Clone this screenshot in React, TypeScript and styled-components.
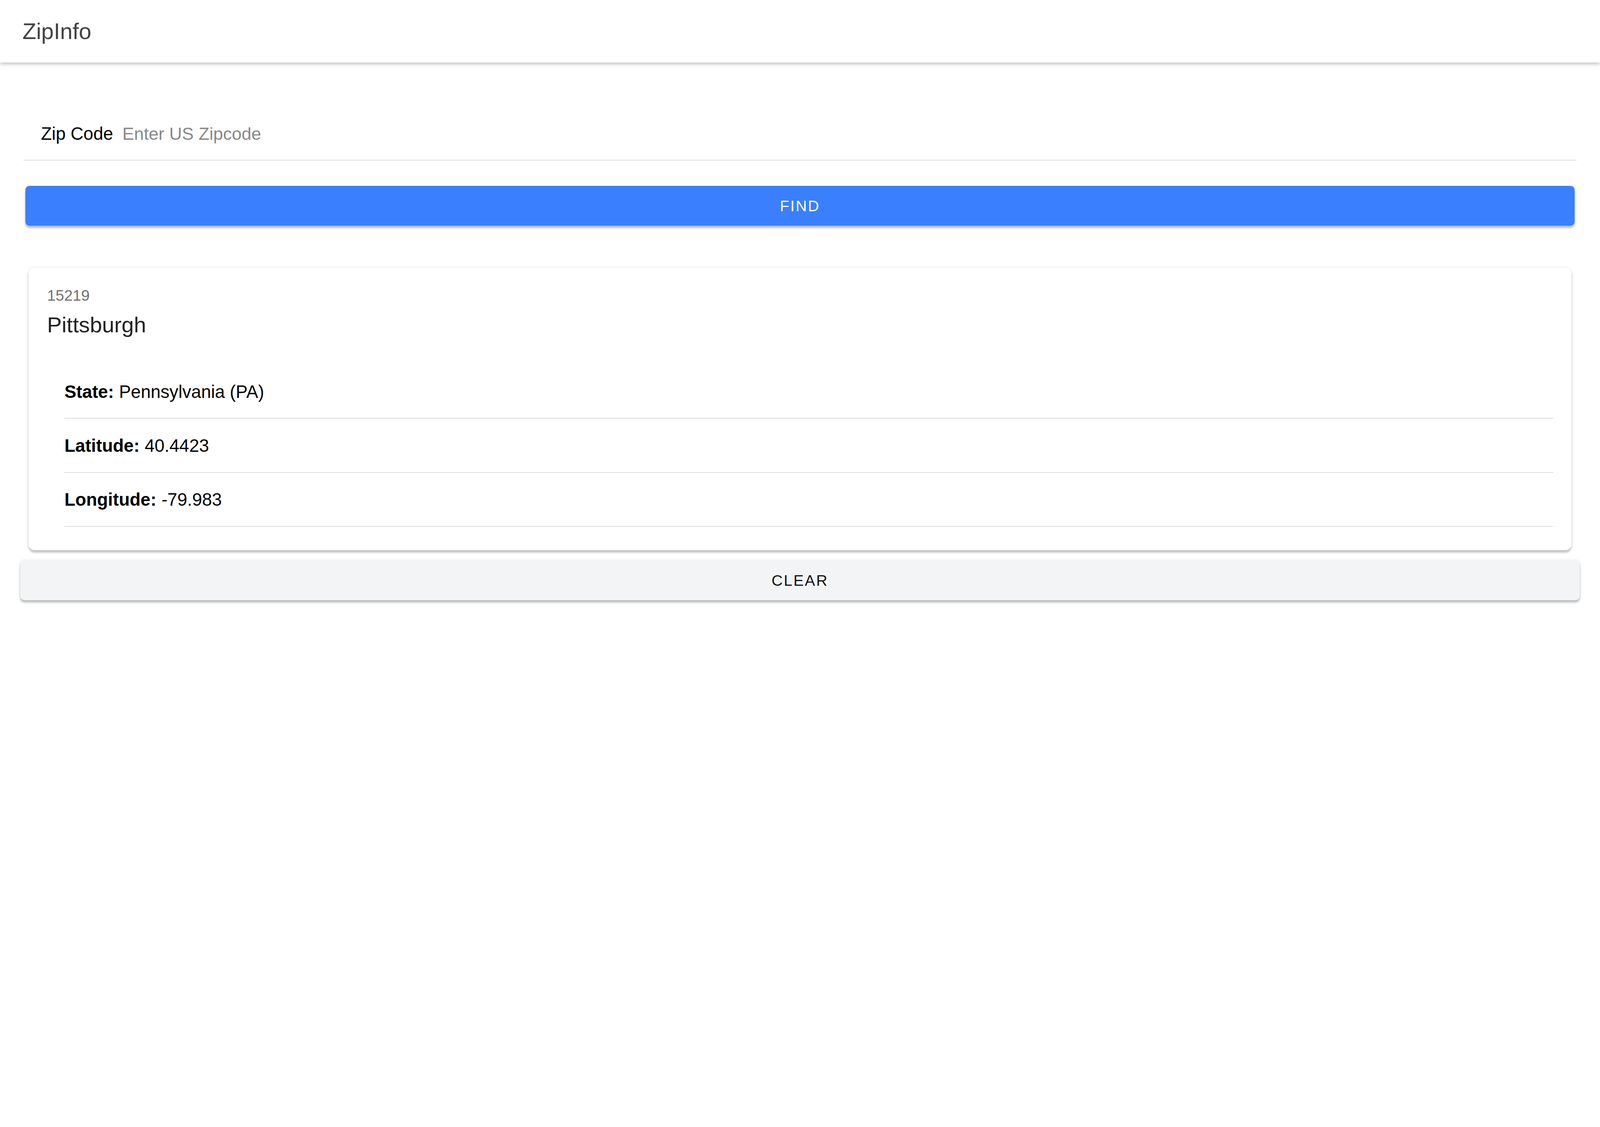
import React from "react"
import styled, { createGlobalStyle } from "styled-components"

// layout is measured on the 1568px wide preview and zoomed up to the window
const GlobalStyle = createGlobalStyle`
  html {
    zoom: 2.619;
  }
  body {
    margin: 0;
    background: #fff;
    font-family: "Liberation Sans", Arial, sans-serif;
    color: #000;
  }
`

const Page = styled.div`
  display: flex;
  flex-direction: column;
`

const Toolbar = styled.header`
  height: 61px;
  display: flex;
  align-items: center;
  padding-left: 22px;
  background: #fff;
  box-shadow: 0 1px 4px rgba(0, 0, 0, 0.28);
`

const Title = styled.h1`
  margin: 0;
  font-size: 22px;
  font-weight: normal;
  color: #434343;
`

const Content = styled.main`
  display: flex;
  flex-direction: column;
  padding-bottom: 30px;
`

const FormItem = styled.label`
  margin: 45px 23px 0;
  height: 50px;
  padding-left: 17px;
  display: flex;
  align-items: center;
  gap: 9px;
  border-bottom: 1px solid #dcdcdc;
`

const Label = styled.span`
  font-size: 17.4px;
  color: #000;
  white-space: nowrap;
`

const Input = styled.input`
  flex: 1;
  border: none;
  outline: none;
  padding: 0;
  background: transparent;
  font-family: inherit;
  font-size: 17.2px;
  color: #000;
  &::placeholder {
    color: #888;
  }
`

const Button = styled.button<{ $primary?: boolean; $inset: number; $top: number }>`
  margin: ${(p) => p.$top}px ${(p) => p.$inset}px 0;
  height: 39px;
  border: none;
  border-radius: 4px;
  background: ${(p) => (p.$primary ? "#3a80fe" : "#f3f4f6")};
  color: ${(p) => (p.$primary ? "#fff" : "#111")};
  font-family: inherit;
  font-size: 15px;
  letter-spacing: 1.1px;
  text-transform: uppercase;
  box-shadow: 0 2px 2px rgba(0, 0, 0, 0.24), 0 0 3px rgba(0, 0, 0, 0.1);
  cursor: pointer;
`

const Card = styled.section`
  margin: 41px 28px 0;
  padding: 18px 18px 23px;
  background: #fff;
  border-radius: 6px;
  box-shadow: 0 2px 2px rgba(0, 0, 0, 0.22), 0 0 4px rgba(0, 0, 0, 0.08);
`

const Subtitle = styled.div`
  font-size: 15px;
  line-height: 18px;
  color: #707070;
`

const City = styled.div`
  margin-top: 7px;
  font-size: 21.5px;
  line-height: 26px;
  color: #222;
`

const List = styled.ul`
  list-style: none;
  margin: 26px 0 0;
  padding: 0 0 0 17px;
`

const Row = styled.li`
  height: 51px;
  display: flex;
  align-items: center;
  padding-top: 1px;
  font-size: 17.4px;
  border-bottom: 1px solid #dcdcdc;
  b {
    margin-right: 5px;
  }
`

const rows = [
  { label: "State:", value: "Pennsylvania (PA)" },
  { label: "Latitude:", value: "40.4423" },
  { label: "Longitude:", value: "-79.983" },
]

export default function App() {
  return (
    <Page>
      <GlobalStyle />
      <Toolbar>
        <Title>ZipInfo</Title>
      </Toolbar>
      <Content>
        <FormItem>
          <Label>Zip Code</Label>
          <Input placeholder="Enter US Zipcode" />
        </FormItem>
        <Button $primary $inset={25} $top={25}>
          Find
        </Button>
        <Card>
          <Subtitle>15219</Subtitle>
          <City>Pittsburgh</City>
          <List>
            {rows.map((r) => (
              <Row key={r.label}>
                <b>{r.label}</b>
                {r.value}
              </Row>
            ))}
          </List>
        </Card>
        <Button $inset={20} $top={10}>
          Clear
        </Button>
      </Content>
    </Page>
  )
}
